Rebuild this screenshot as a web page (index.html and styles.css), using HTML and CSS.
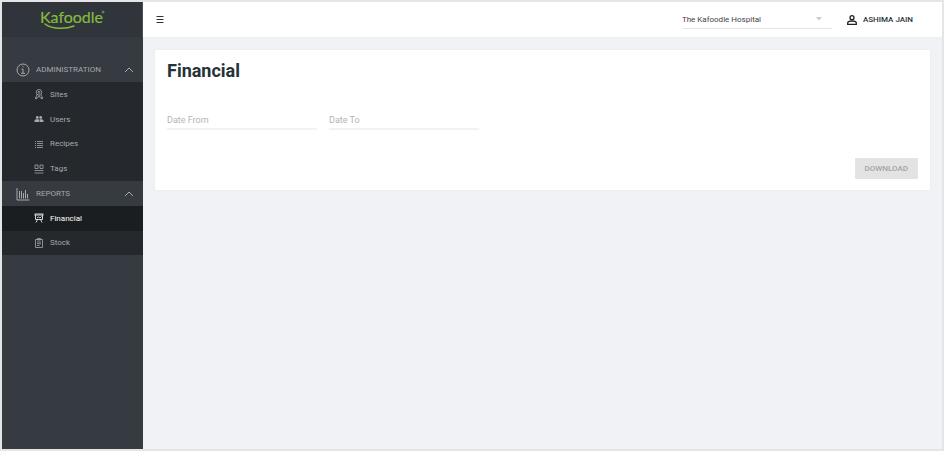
FILE: index.html
```html
<!DOCTYPE html>
<html lang="en">
<head>
<meta charset="utf-8">
<title>Kafoodle – Financial</title>
<link rel="stylesheet" href="styles.css">
</head>
<body>
<aside class="sidebar">
  <a class="brand" href="#" aria-label="Kafoodle">
    <svg class="logo" viewBox="0 0 66 24">
      <text class="wordmark" x="0" y="15">Kafoodle</text>
      <circle cx="63" cy="4" r="1" stroke-width="0.7"/>
      <path d="M5 16c6 5 20 5.500 29 2" stroke-width="1.500" stroke-linecap="round"/>
    </svg>
  </a>
  <nav class="menu">
    <button class="group" type="button">
      <svg class="group-icon" viewBox="0 0 14 14"><circle cx="7" cy="7" r="6"/><path d="M5.500 6H7v4M5 10.300h4M6.500 3.700h1"/></svg>
      <span>ADMINISTRATION</span>
      <svg class="chevron" viewBox="0 0 10 6"><path d="M1 5l4-4 4 4"/></svg>
    </button>
    <ul class="items four">
      <li><a href="#"><svg class="item-icon" viewBox="0 0 10 10"><circle cx="5" cy="3.300" r="2.800"/><circle cx="5" cy="3.300" r="1"/><path d="M3 5.500L1.500 9h2L5 6.500 6.500 9h2L7 5.500M1 9.500h2M7 9.500h2"/></svg>Sites</a></li>
      <li><a href="#"><svg class="item-icon solid" viewBox="0 0 10 10"><circle cx="3.300" cy="3.500" r="1.400"/><circle cx="6.700" cy="3.500" r="1.400"/><path d="M.5 8V6.700c0-1 1.500-1.400 2.800-1.400s2.200.4 2.200 1.400V8zM6 8V6.700c0-.6-.2-1-.6-1.300 1.700-.3 4.100.1 4.100 1.300V8z"/></svg>Users</a></li>
      <li><a href="#"><svg class="item-icon" viewBox="0 0 10 10"><path d="M1 2.500h1M3 2.500h6M1 4.500h1M3 4.500h6M1 6.500h1M3 6.500h6M1 8.500h1M3 8.500h6"/></svg>Recipes</a></li>
      <li><a href="#"><svg class="item-icon" viewBox="0 0 10 10"><path d="M1 1h3v3.500H1zM6 1h3v3.500H6zM.5 6.500h9M.5 9h9"/></svg>Tags</a></li>
    </ul>
    <button class="group" type="button">
      <svg class="group-icon" viewBox="0 0 14 14"><path d="M1 1v12h12.500M3.500 4v7.500M5.500 4v7.500M7.500 6v5.500M9.500 3v8.500M11.500 7v4.500"/></svg>
      <span>REPORTS</span>
      <svg class="chevron" viewBox="0 0 10 6"><path d="M1 5l4-4 4 4"/></svg>
    </button>
    <ul class="items two">
      <li><a class="current" href="#" aria-current="page"><svg class="item-icon" viewBox="0 0 10 10"><path d="M.5 1h9M.5 2h9M1.500 2v4.500h7V2M3 5l1.500-1L6 5l1.500-1.500M3.500 6.500L2 9.500M6.500 6.500L8 9.500"/></svg>Financial</a></li>
      <li><a href="#"><svg class="item-icon" viewBox="0 0 10 10"><path d="M1.500 1.500h7v8h-7zM3.500.5h3v1.500h-3zM3 4h4M3 5.700h4M3 7.500h2.500"/></svg>Stock</a></li>
    </ul>
  </nav>
</aside>
<div class="page">
  <header class="topbar">
    <button class="toggle" type="button" aria-label="Toggle menu"><svg viewBox="0 0 8 8"><path d="M.5 .5h7M.5 3.500h7M.5 6.500h7"/></svg></button>
    <div class="site">
      <select aria-label="Site"><option>The Kafoodle Hospital</option></select>
      <svg class="caret" viewBox="0 0 6 4"><path d="M0 0h6L3 3.500z"/></svg>
    </div>
    <a class="user" href="#">
      <svg viewBox="0 0 10 10"><circle cx="5" cy="2.700" r="2"/><path d="M.7 9.300V8c0-1.500 2.500-2 4.300-2s4.300.5 4.300 2v1.300z"/></svg>
      ASHIMA JAIN
    </a>
  </header>
  <main class="content">
    <form class="card">
      <h1>Financial</h1>
      <div class="dates">
        <input type="text" aria-label="Date From" placeholder="Date From">
        <input type="text" aria-label="Date To" placeholder="Date To">
      </div>
      <button class="download" type="button" disabled>DOWNLOAD</button>
    </form>
  </main>
</div>
</body>
</html>
```
FILE: styles.css
```css
* {
  box-sizing: border-box;
}

body {
  margin: 0;
  min-height: 100vh;
  display: flex;
  border: 2px solid #e5e5e5;
  background: #f0f2f6;
  color: #263238;
  font-family: Roboto, "Liberation Sans", sans-serif;
  font-size: 8px;
}

button,
input,
select {
  margin: 0;
  padding: 0;
  border: 0;
  border-radius: 0;
  background: none;
  color: inherit;
  font: inherit;
}

a {
  color: inherit;
  text-decoration: none;
}

svg {
  flex: none;
}

/* Sidebar */
.sidebar {
  flex: none;
  width: 141px;
  background: #363a41;
  color: #a5a8ac;
}

.sidebar svg {
  fill: none;
  stroke: currentColor;
}

.brand {
  display: flex;
  justify-content: center;
  height: 35px;
  padding-top: 6px;
  background: #2f353a;
  color: #84ba3f;
}

.logo {
  width: 66px;
  height: 24px;
}

.wordmark {
  fill: currentColor;
  stroke-width: 0.2;
  font-family: Lato, sans-serif;
  font-size: 16px;
}

.menu {
  padding-top: 20px;
}

.group {
  display: flex;
  align-items: center;
  width: 100%;
  height: 25px;
  padding: 0 9px 0 14px;
  gap: 6px;
  text-align: left;
}

.group span {
  flex: 1;
}

.group-icon {
  width: 14px;
  height: 14px;
}

.chevron {
  width: 10px;
  height: 6px;
}

.items {
  display: grid;
  grid-auto-rows: 1fr;
  margin: 0;
  padding: 0;
  list-style: none;
  background: #25282c;
}

.four {
  height: 99px;
}

.two {
  height: 49px;
}

.items a {
  display: flex;
  align-items: center;
  height: 100%;
  padding-left: 32px;
  gap: 6px;
}

.items .current {
  background: #1b1e21;
  color: #fff;
}

.item-icon {
  width: 10px;
  height: 10px;
  stroke-width: 0.8;
}

.sidebar .solid {
  fill: currentColor;
  stroke: none;
}

/* Top bar */
.page {
  flex: 1;
  min-width: 0;
}

.topbar {
  display: flex;
  align-items: center;
  height: 35px;
  padding: 0 29px 0 13px;
  background: #fff;
  box-shadow: 0 0 1px #d8dade;
}

.toggle {
  display: flex;
  margin-right: auto;
}

.toggle svg {
  width: 8px;
  height: 8px;
  stroke: #333;
}

.site {
  display: flex;
  align-items: center;
  width: 150px;
  height: 19px;
  margin-right: 15px;
  padding-right: 10px;
  border-bottom: 1px solid #e6e6e6;
}

.site select {
  flex: 1;
  appearance: none;
  color: #444;
}

.caret {
  width: 6px;
  height: 4px;
  fill: #ccc;
}

.user {
  display: flex;
  align-items: center;
  gap: 6px;
  font-weight: 500;
}

.user svg {
  width: 10px;
  height: 10px;
  fill: none;
  stroke: #222;
  stroke-width: 1.3;
}

/* Card */
.content {
  padding: 13px 12px;
}

.card {
  display: flex;
  flex-direction: column;
  padding: 9px 12px 11px;
  background: #fff;
  box-shadow: 0 0 1px #dcdee2;
}

h1 {
  margin: 0;
  font-size: 18px;
  font-weight: 700;
  line-height: 24px;
}

.dates {
  display: flex;
  gap: 12px;
  margin-top: 28px;
}

.dates input {
  width: 150px;
  height: 19px;
  padding-top: 1px;
  border-bottom: 2px solid #f2f2f2;
  font-size: 9px;
}

.dates input::placeholder {
  color: #b4b4b4;
}

.download {
  align-self: flex-end;
  height: 21px;
  margin-top: 28px;
  padding: 0 10px;
  border-radius: 1px;
  background: #e3e3e3;
  color: #a3a3a3;
  font-weight: 500;
}
```
